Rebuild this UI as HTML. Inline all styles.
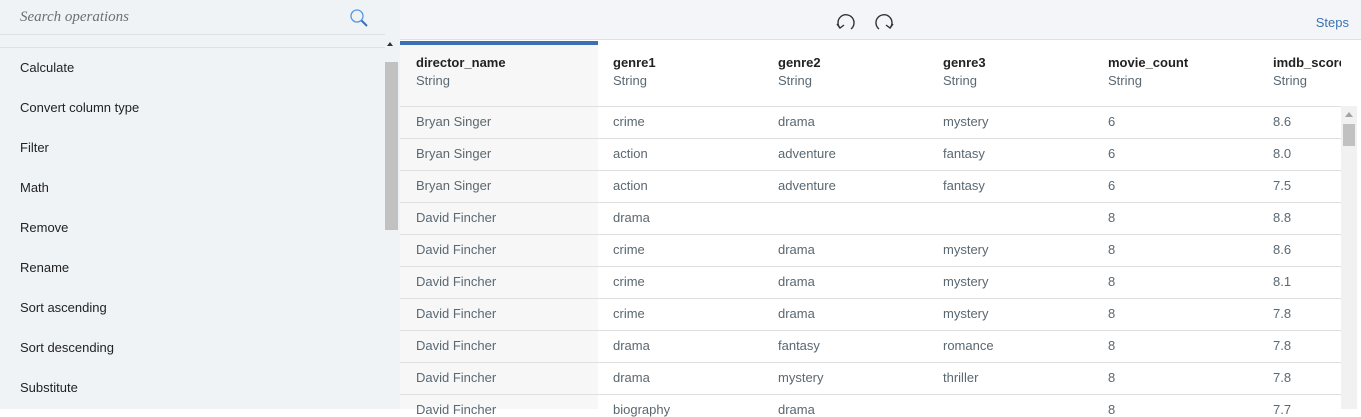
<!DOCTYPE html>
<html><head><style>
*{margin:0;padding:0;box-sizing:border-box}
body{width:1361px;height:409px;overflow:hidden;font-family:"Liberation Sans",sans-serif;background:#fff;position:relative;font-size:13px}
#left{position:absolute;left:0;top:0;width:400px;height:409px;background:#f0f3f6}
#search{position:absolute;left:20px;top:9px;font-family:"Liberation Serif",serif;font-style:italic;color:#6f6f6f;font-size:15px}
.hl{position:absolute;left:0;width:385px;height:1px;background:#dde1e6}
.op{position:absolute;left:20px;color:#222;font-size:13px}
#lsb{position:absolute;left:385px;top:62px;width:13px;height:168px;background:#c1c1c1}
#top{position:absolute;left:400px;top:0;width:961px;height:40px;background:#f4f5f8;border-bottom:1px solid #dde1e6}
#steps{position:absolute;right:12px;top:15px;color:#3d70b2;font-size:13px}
#c1bg{position:absolute;left:400px;top:41px;width:198px;height:368px;background:#f7f7f7}
#blue{position:absolute;left:400px;top:41px;width:198px;height:4px;background:#3d70b2}
.t{position:absolute;white-space:nowrap;color:#5a6872;font-size:13px}
.h{color:#222;font-weight:bold;font-size:13px}
.rl{position:absolute;left:400px;width:941px;height:1px;background:#e0e0e0}
#rsb{position:absolute;left:1341px;top:106px;width:16px;height:303px;background:#f1f1f1}
#rth{position:absolute;left:1343px;top:124px;width:12px;height:22px;background:#c1c1c1}
</style></head><body>
<div id="left">
<div id="search">Search operations</div>
<svg style="position:absolute;left:349px;top:8px" width="20" height="20"><circle cx="8" cy="8" r="6" fill="none" stroke="#5596e6" stroke-width="1.3"/><line x1="12.5" y1="12.5" x2="18" y2="18" stroke="#3d70b2" stroke-width="2"/></svg>
<div class="hl" style="top:34px"></div>
<div class="hl" style="top:47px"></div>
<div style="position:absolute;left:387px;top:42px;border:3px solid transparent;border-bottom:4px solid #333;border-top:0"></div>
<div id="lsb"></div>
<div class="op" style="top:60px">Calculate</div>
<div class="op" style="top:100px">Convert column type</div>
<div class="op" style="top:140px">Filter</div>
<div class="op" style="top:180px">Math</div>
<div class="op" style="top:220px">Remove</div>
<div class="op" style="top:260px">Rename</div>
<div class="op" style="top:300px">Sort ascending</div>
<div class="op" style="top:340px">Sort descending</div>
<div class="op" style="top:380px">Substitute</div>
</div>
<div id="top">
<svg style="position:absolute;left:436px;top:11px" width="60" height="22" fill="none" stroke="#333" stroke-width="1.4"><path d="M4 17 A8 8 0 1 1 15 18"/><path d="M1 13 L4 17 L8 14"/><path d="M54 17 A8 8 0 1 0 43 18"/><path d="M57 13 L54 17 L50 14"/></svg>
<div id="steps">Steps</div>
</div>
<div id="c1bg"></div><div id="blue"></div>
<div class="t h" style="left:416px;top:55px">director_name</div><div class="t" style="left:416px;top:73px">String</div>
<div class="t h" style="left:613px;top:55px">genre1</div><div class="t" style="left:613px;top:73px">String</div>
<div class="t h" style="left:778px;top:55px">genre2</div><div class="t" style="left:778px;top:73px">String</div>
<div class="t h" style="left:943px;top:55px">genre3</div><div class="t" style="left:943px;top:73px">String</div>
<div class="t h" style="left:1108px;top:55px">movie_count</div><div class="t" style="left:1108px;top:73px">String</div>
<div class="t h" style="left:1273px;top:55px;width:68px;overflow:hidden">imdb_score</div><div class="t" style="left:1273px;top:73px">String</div>
<div id="rows"></div>
<div id="rsb"></div><div id="rth"></div>
<div style="position:absolute;left:1345px;top:112px;border:4px solid transparent;border-bottom:5px solid #a3a3a3;border-top:0"></div>
<script>
var d=[["Bryan Singer","crime","drama","mystery","6","8.6"],["Bryan Singer","action","adventure","fantasy","6","8.0"],["Bryan Singer","action","adventure","fantasy","6","7.5"],["David Fincher","drama","","","8","8.8"],["David Fincher","crime","drama","mystery","8","8.6"],["David Fincher","crime","drama","mystery","8","8.1"],["David Fincher","crime","drama","mystery","8","7.8"],["David Fincher","drama","fantasy","romance","8","7.8"],["David Fincher","drama","mystery","thriller","8","7.8"],["David Fincher","biography","drama","","8","7.7"]];
var xs=[416,613,778,943,1108,1273],h="";
d.forEach(function(r,i){var y=106+i*32;h+='<div class="rl" style="top:'+y+'px"></div>';r.forEach(function(c,j){h+='<div class="t" style="left:'+xs[j]+'px;top:'+(y+8)+'px">'+c+'</div>'})});
document.getElementById("rows").innerHTML=h;
</script>
</body></html>
